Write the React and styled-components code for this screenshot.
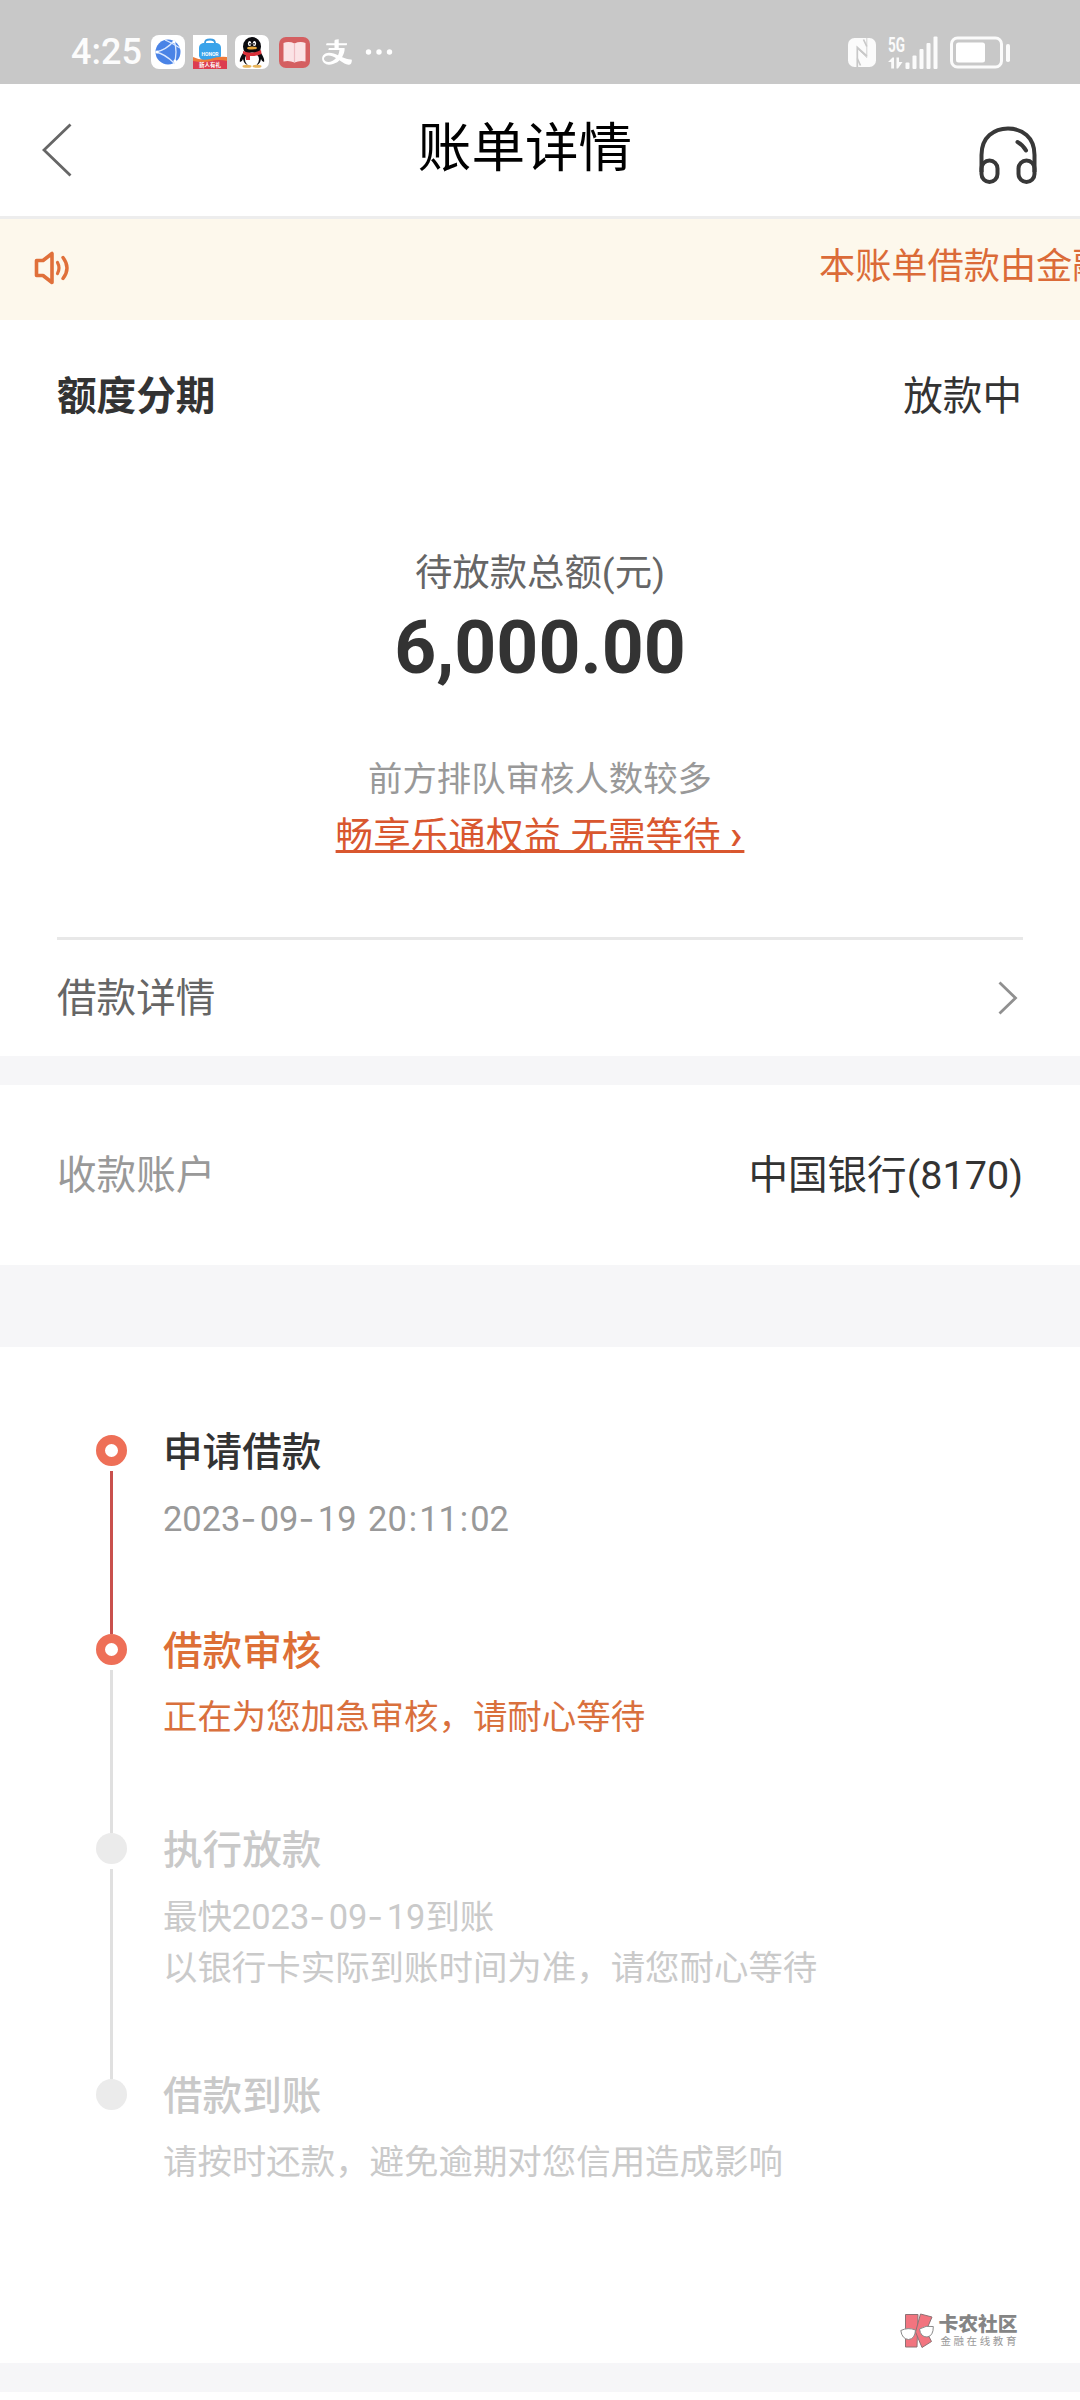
import React from 'react'
import styled, { createGlobalStyle } from 'styled-components';
import { AiOutlineAlipay } from 'react-icons/ai';


const steps = [
  { title: '申请借款', lines: ['2023-09-19 20:11:02'], state: 'done', height: 199 },
  { title: '借款审核', lines: ['正在为您加急审核，请耐心等待'], state: 'current', height: 199 },
  { title: '执行放款', lines: ['最快2023-09-19到账', '以银行卡实际到账时间为准，请您耐心等待'], state: 'todo', height: 246 },
  { title: '借款到账', lines: ['请按时还款，避免逾期对您信用造成影响'], state: 'todo', height: 120 },
];

const titleColors = { done: '#333', current: '#dd6f36', todo: '#c9c9c9' };
const textColors = { done: '#999', current: '#d9703d', todo: '#cacaca' };

const withMarks = (text) =>
  text.split(/([-:])/).map((part, i) => {
    if (part === '-') return <Dash key={i}>-</Dash>;
    if (part === ':') return <Colon key={i}>:</Colon>;
    return part;
  });

const GlobeIcon = () => (
  <svg width="34" height="34" viewBox="0 0 34 34">
    <rect width="34" height="34" rx="8" fill="#fff" />
    <circle cx="17" cy="17" r="12.500" fill="#4a83e6" />
    <g fill="none" stroke="#dbe8ff" strokeWidth="1.3">
      <path d="M5 17 Q15 15 23 6" />
      <path d="M5 17 Q14 19 23 28" />
      <path d="M23 5 Q27 17 23 29" />
      <path d="M14 5 Q19 7 29 13" />
    </g>
    <circle cx="6" cy="17" r="1.6" fill="#fff" />
    <circle cx="23" cy="7" r="1.4" fill="#fff" />
    <circle cx="24" cy="26" r="1.6" fill="#fff" />
  </svg>
);

const StoreIcon = () => (
  <svg width="34" height="34" viewBox="0 0 34 34">
    <rect width="34" height="34" fill="#fff" />
    <path d="M12 9 V8 Q12 4.500 17 4.500 Q22 4.500 22 8 V9" fill="none" stroke="#3a9be0" strokeWidth="1.800" />
    <path d="M10 8 H24 Q28 9 28 13 V21 Q27 25 22 26 H12 Q7 25 6 21 V13 Q6 9 10 8" fill="#39a3ea" />
    <path d="M0 22 Q8 26 17 24 Q26 21 34 22 V34 H0 Z" fill="#ee7a3a" />
    <path d="M0 26 Q10 28 18 26 Q26 24 34 26 V34 H0 Z" fill="#dc3d50" />
    <text x="17" y="20.500" fontSize="5" fontWeight="700" fill="#fff" textAnchor="middle" fontFamily="Roboto, sans-serif">HONOR</text>
    <text x="17" y="32" fontSize="5.500" fontWeight="700" fill="#fff" textAnchor="middle" fontFamily="'Noto Sans CJK SC', sans-serif">新人有礼</text>
  </svg>
);

const PenguinIcon = () => (
  <svg width="34" height="34" viewBox="0 0 34 34">
    <rect width="34" height="34" rx="7" fill="#fff" />
    <path d="M8 18 Q4 24 5 27 Q7 27 8 24 Q9 31 17 31 Q25 31 26 24 Q27 27 29 27 Q30 24 26 18 Z" fill="#0b0b0f" />
    <ellipse cx="17" cy="11.500" rx="9" ry="9.500" fill="#0b0b0f" />
    <ellipse cx="17" cy="24.500" rx="7" ry="7" fill="#fff" />
    <ellipse cx="12" cy="31.200" rx="4.500" ry="1.500" fill="#e8b45a" />
    <ellipse cx="22" cy="31.200" rx="4.500" ry="1.500" fill="#e8b45a" />
    <ellipse cx="14.600" cy="8.500" rx="1.700" ry="2.500" fill="#fff" />
    <ellipse cx="19.400" cy="8.500" rx="1.700" ry="2.500" fill="#fff" />
    <circle cx="15" cy="8.800" r="0.900" fill="#0b0b0f" />
    <circle cx="19" cy="8.800" r="0.900" fill="#0b0b0f" />
    <ellipse cx="17" cy="13" rx="5" ry="1.600" fill="#e9a93c" />
    <path d="M8 16 Q17 20 26 15 L26.500 19 Q21 21.500 15 21 V25 H11 V20.500 L8 19 Z" fill="#d9313a" />
  </svg>
);

const BookIcon = () => (
  <svg width="31" height="31" viewBox="0 0 31 31">
    <rect width="31" height="31" rx="7" fill="#d45f61" />
    <path d="M4.500 6 Q10 4 15.500 6.500 Q21 4 26.500 6 V24.500 Q21 23 15.500 25.500 Q10 23 4.500 24.500 Z" fill="#fbe3e6" />
    <path d="M15.500 6.500 V25.500" stroke="#eebbc2" strokeWidth="1.200" />
  </svg>
);

const DotsIcon = () => (
  <svg width="28" height="8" viewBox="0 0 28 8" fill="#fff">
    <circle cx="3.500" cy="4" r="2.700" />
    <circle cx="14" cy="4" r="2.700" />
    <circle cx="24.500" cy="4" r="2.700" />
  </svg>
);

const NfcIcon = () => (
  <svg width="28" height="29" viewBox="0 0 28 29">
    <rect width="28" height="29" rx="6.500" fill="#fbfbfb" />
    <g fill="none" stroke="#c8c8c8" strokeWidth="1.700">
      <path d="M9.300 29 V9.500 L18.800 18" />
      <path d="M18.800 0 V19.500 L9.300 10.500" strokeWidth="0.800" />
      <path d="M9.300 20.500 L12.500 27.500 M15.500 1.500 L18.800 8.500" />
    </g>
  </svg>
);

const SignalIcon = () => (
  <svg width="50" height="33" viewBox="0 0 50 33" fill="#fbfbfb" overflow="visible">
    <text x="0" y="15.500" fontSize="20" fontWeight="700" textLength="17" lengthAdjust="spacingAndGlyphs" fontFamily="Roboto, sans-serif">5G</text>
    <path d="M0 26 L4.500 21.500 H6 V32.500 H3.200 V26 Z" />
    <path d="M8.500 21.500 H11 V26 H14.500 L10 32.500 H8.500 Z" />
    <rect x="17.500" y="26.500" width="4" height="6.500" rx="1" />
    <rect x="24.500" y="19.500" width="4" height="13.500" rx="1" />
    <rect x="31.500" y="13" width="4" height="20" rx="1" />
    <rect x="38.500" y="7" width="4" height="26" rx="1" />
    <rect x="45.500" y="0.500" width="4" height="32.500" rx="1" />
  </svg>
);

const BatteryIcon = () => (
  <svg width="61" height="33" viewBox="0 0 61 33">
    <rect x="1.500" y="2" width="50" height="29" rx="6" fill="none" stroke="#fbfbfb" strokeWidth="3" />
    <rect x="6" y="6.500" width="29" height="20" rx="2.500" fill="#fff" />
    <rect x="56" y="8" width="4" height="18" rx="1.800" fill="#fbfbfb" />
  </svg>
);

const BackIcon = () => (
  <svg width="30" height="54" viewBox="0 0 30 54" fill="none" stroke="#666" strokeWidth="2.800">
    <path d="M28.500 1.500 L2 27 L28.500 52.500" />
  </svg>
);

const HeadsetIcon = () => (
  <svg width="58" height="58" viewBox="0 0 58 58" fill="none" stroke="#383838" strokeWidth="4">
    <path d="M2.500 46 V29 Q2.500 16 10.500 9 Q18 2.500 29 2.500 Q40 2.500 47.500 9 Q55.500 16 55.500 29 V46" />
    <rect x="2.500" y="34.500" width="16" height="21.500" rx="8" />
    <rect x="39.500" y="34.500" width="16" height="21.500" rx="8" />
    <path d="M38.500 16 Q44 19 47 24.500" strokeLinecap="round" />
  </svg>
);

const SpeakerIcon = () => (
  <svg width="36" height="34" viewBox="0 0 36 34" fill="none" stroke="#e0703a" strokeWidth="3.600">
    <path d="M2.500 9.500 H9 L18 2.500 V31.500 L9 24.500 H2.500 Z" strokeLinejoin="round" />
    <path d="M23.500 11.500 Q26.500 17 23.500 22.500" strokeLinecap="round" strokeWidth="3.200" />
    <path d="M29 6.500 Q37 17 29 27.500" strokeLinecap="round" strokeWidth="3.400" />
  </svg>
);

const ArrowIcon = () => (
  <svg width="20" height="34" viewBox="0 0 20 34" fill="none" stroke="#909090" strokeWidth="2.800">
    <path d="M1.500 1.500 L17.500 17 L1.500 32.500" />
  </svg>
);

const MarkIcon = () => (
  <svg width="34" height="36" viewBox="0 0 34 36">
    <g fill="#f2747f" stroke="#8d7275" strokeWidth="1">
      <path d="M5.500 1.500 H18 L17 34 H5.500 Z" />
      <path d="M20.500 1 L32 4 L26 18 L31.500 28.500 L22 34.500 L15.500 19 Z" />
    </g>
    <g fill="#fff" stroke="#8a8a8a" strokeWidth="1">
      <path d="M0.800 17.500 Q8 14 15.500 17 Q15 26 8.500 26.500 Q2 26 0.800 17.500 Z" />
      <path d="M19.500 16 Q26 12 33.300 13.500 Q33.500 23 27 24 Q20.500 24 19.500 16 Z" />
    </g>
  </svg>
);

const App = () => {
  return (
    <Page lang="zh-CN">
      <GlobalStyle />

      <StatusBar>
        <Clock>4:25</Clock>
        <AppIcons>
          <GlobeIcon />
          <StoreIcon />
          <PenguinIcon />
          <BookIcon />
          <Alipay />
          <DotsIcon />
        </AppIcons>
        <SystemIcons>
          <NfcIcon />
          <SignalIcon />
          <BatteryIcon />
        </SystemIcons>
      </StatusBar>

      <Header>
        <BackIcon />
        <Title>账单详情</Title>
        <Headset>
          <HeadsetIcon />
        </Headset>
      </Header>

      <Notice>
        <SpeakerIcon />
        <NoticeText>本账单借款由金融</NoticeText>
      </Notice>

      <Summary>
        <SummaryHead>
          <Product>额度分期</Product>
          <Status>放款中</Status>
        </SummaryHead>
        <AmountLabel>待放款总额(元)</AmountLabel>
        <Amount>6,000.00</Amount>
        <QueueText>前方排队审核人数较多</QueueText>
        <VipLink>畅享乐通权益 无需等待 <b>›</b></VipLink>
        <DetailRow>
          <RowText>借款详情</RowText>
          <ArrowIcon />
        </DetailRow>
      </Summary>

      <Account>
        <RowText $muted>收款账户</RowText>
        <RowText>中国银行(8170)</RowText>
      </Account>

      <Progress>
        {steps.map((step, i) => (
          <Step key={step.title} $height={step.height}>
            <Rail>
              <Dot $active={step.state !== 'todo'} />
              {i < steps.length - 1 && <Line $active={step.state === 'done'} />}
            </Rail>
            <div>
              <StepTitle $state={step.state}>{step.title}</StepTitle>
              <StepText $state={step.state}>
                {step.lines.map((line) => (
                  <p key={line}>{withMarks(line)}</p>
                ))}
              </StepText>
            </div>
          </Step>
        ))}

        <Brand>
          <MarkIcon />
          <div>
            <BrandName>卡农社区</BrandName>
            <BrandText>金融在线教育</BrandText>
          </div>
        </Brand>
      </Progress>

      <BottomBar />
    </Page>
  );
};

export default App;

const GlobalStyle = createGlobalStyle`
  * {
    box-sizing: border-box;
  }

  body {
    margin: 0;
    background-color: white;
  }

  p {
    margin: 0;
  }

  svg {
    display: block;
    flex-shrink: 0;
  }
`

const Page = styled.div`
  width: 1080px;
  height: 2400px;
  overflow: hidden;

  font-family: Roboto, 'Noto Sans CJK SC', sans-serif;
  font-size: 39.6px;
  color: #333;
  white-space: nowrap;
`

const StatusBar = styled.div`
  height: 84px;
  padding: 20px 69px 0 71px;

  display: flex;
  align-items: center;

  background-color: #c8c8c8;
`

const Clock = styled.div`
  width: 80px;

  font-size: 36px;
  font-weight: 500;
  color: #fcfcfc;
`

const AppIcons = styled.div`
  display: flex;
  align-items: center;
  gap: 8px;

  svg:nth-child(4) {
    margin-left: 2px;
  }
`

const Alipay = styled(AiOutlineAlipay)`
  width: 34px;
  height: 34px;
  margin: 0 3px 0 2px;

  color: white;
`

const SystemIcons = styled.div`
  margin-left: auto;

  display: flex;
  align-items: center;
  gap: 12px;
`

const Header = styled.div`
  height: 135px;
  padding: 0 43px 0 42px;

  display: grid;
  grid-template-columns: 1fr auto 1fr;
  align-items: center;

  border-bottom: 3px solid #ededed;
`

const Title = styled.div`
  padding: 0 29px 14px 0;

  font-size: 53.6px;
  color: black;
`

const Headset = styled.div`
  padding-top: 10px;
  justify-self: end;
`

const Notice = styled.div`
  height: 101px;
  padding: 0 0 3px 34px;
  overflow: hidden;

  display: flex;
  align-items: center;

  background-color: #fdf8ec;
`

const NoticeText = styled.div`
  margin-left: 749px;

  font-size: 36.2px;
  line-height: 50px;
  padding-bottom: 2px;
  color: #db6b38;
`

const Summary = styled.div`
  height: 736px;
  padding: 47px 57px 0;

  display: flex;
  flex-direction: column;
  align-items: center;
`

const SummaryHead = styled.div`
  width: 100%;

  display: flex;
  justify-content: space-between;

  line-height: 60px;
`

const Product = styled.div`
  font-weight: 700;
`

const Status = styled.div`
  margin-right: 1px;
`

const AmountLabel = styled.div`
  margin-top: 116px;

  font-size: 37.4px;
  line-height: 60px;
  color: #666;
`

const Amount = styled.div`
  margin-top: 5px;

  font-size: 73.3px;
  font-weight: 700;
  line-height: 80px;
`

const QueueText = styled.div`
  margin-top: 66px;

  font-size: 34.4px;
  line-height: 50px;
  color: #999;
`

const VipLink = styled.div`
  margin-top: 6px;

  font-size: 37.6px;
  line-height: 50px;
  color: #d9572f;

  text-decoration: underline;
  text-decoration-thickness: 3px;
  text-decoration-skip-ink: none;
  text-underline-offset: 1px;

  b {
    font-size: 41px;
    font-weight: 500;
    letter-spacing: 2px;
  }
`

const DetailRow = styled.div`
  width: 100%;
  height: 120px;
  margin-top: 76px;
  padding-right: 5px;

  display: flex;
  align-items: center;
  justify-content: space-between;

  border-top: 3px solid #e8e8e8;
  color: #666;
`

const RowText = styled.span`
  padding-bottom: 7px;
  color: ${props => props.$muted ? '#999' : 'inherit'};
`

const Account = styled.div`
  height: 291px;
  padding: 0 57px;

  display: flex;
  align-items: center;
  justify-content: space-between;

  border-top: 29px solid #f6f6f8;
  border-bottom: 82px solid #f6f6f8;
`

const Progress = styled.div`
  height: 1016px;
  padding: 88px 61px 14px 96px;

  display: flex;
  flex-direction: column;
`

const Step = styled.div`
  height: ${props => props.$height}px;

  display: flex;
  gap: 36px;
`

const Rail = styled.div`
  width: 31px;

  display: flex;
  flex-direction: column;
  align-items: center;
`

const Dot = styled.div`
  width: 31px;
  height: 31px;
  flex-shrink: 0;

  border: ${props => props.$active ? '9px solid #ee6f57' : 'none'};
  border-radius: 50%;
  background-color: ${props => props.$active ? 'white' : '#ebebeb'};
`

const Line = styled.div`
  width: 3px;
  margin-top: 5px;
  flex: 1;

  background-color: ${props => props.$active ? '#c9504d' : '#e0e0e0'};
`

const StepTitle = styled.div`
  font-weight: 500;
  line-height: 36px;
  color: ${props => titleColors[props.$state]};
`

const StepText = styled.div`
  margin-top: 22px;

  font-size: 34.45px;
  line-height: 51px;
  word-spacing: 3px;
  color: ${props => textColors[props.$state]};
`

const Dash = styled.span`
  font-family: Inter, sans-serif;
  letter-spacing: 3.5px;
`

const Colon = styled.span`
  padding: 0 2px;
`

const Brand = styled.div`
  margin-top: auto;
  align-self: flex-end;

  display: flex;
  gap: 4px;
`

const BrandName = styled.div`
  font-size: 19.8px;
  font-weight: 900;
  line-height: 23px;
  color: #858585;
`

const BrandText = styled.div`
  margin-left: 2px;

  font-size: 10.5px;
  line-height: 12px;
  letter-spacing: 2.6px;
  color: #999;
`

const BottomBar = styled.div`
  height: 29px;
  background-color: #f6f6f8;
`
